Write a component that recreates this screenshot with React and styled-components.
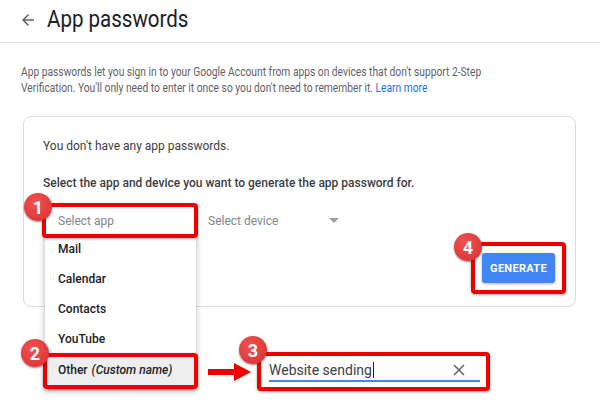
import React from "react";
import styled, { createGlobalStyle } from "styled-components";

const GlobalStyle = createGlobalStyle`
  body {
    margin: 0;
    background: #fff;
    font-family: Roboto, "Liberation Sans", Arial, sans-serif;
  }
`;

const apps = ["Mail", "Calendar", "Contacts", "YouTube"];

const Page = styled.div`
  width: 600px;
  height: 413px;
  overflow: hidden;
  position: relative;
`;

const Header = styled.header`
  display: flex;
  align-items: center;
  padding-left: 19px;
  border-bottom: 1px solid #e0e0e0;
  box-sizing: border-box;
  height: 43px;
`;

const BackButton = styled.span`
  display: flex;
  color: #5f6368;
  margin-right: 10px;
  margin-top: -3px;
`;

// the screenshot is a bit narrow horizontally
const Title = styled.h1`
  margin: -5px 0 0;
  font-size: 24px;
  font-weight: 400;
  color: #202124;
  transform: scaleX(0.855);
  transform-origin: left center;
  white-space: nowrap;
`;

const Intro = styled.p`
  margin: 21px 0 0 21px;
  width: 600px;
  font-size: 12.5px;
  line-height: 16px;
  color: #5f6368;
  transform: scaleX(0.82);
  transform-origin: left top;
`;

const Link = styled.a`
  color: #1a73e8;
  text-decoration: none;
`;

const Card = styled.section`
  position: relative;
  margin: 20px 24px 0 23px;
  border: 1px solid #dadce0;
  border-radius: 8px;
  padding: 20px 9px 12px 18px;
`;

const CardText = styled.p`
  margin: ${(p) => p.$top || 0}px 0 0 1px;
  font-size: 12px;
  line-height: 18px;
  color: #3c4043;
  font-weight: ${(p) => (p.$strong ? 500 : 400)};
`;

const SelectRow = styled.div`
  display: flex;
  align-items: center;
  margin-top: 11px;
`;

const SelectWrap = styled.div`
  position: relative;
`;

const Highlight = styled.div`
  position: relative;
  z-index: 2;
  border: 4px solid #ee0000;
  border-radius: 4px;
  box-shadow: 0 1px 3px rgba(0, 0, 0, 0.35);
  padding: ${(p) => p.$pad || "0"};
`;

const SelectBox = styled.div`
  width: 148px;
  height: 27px;
  box-sizing: border-box;
  padding-left: 12px;
  display: flex;
  align-items: center;
  font-size: 12px;
  color: #80868b;
  background: #fff;
`;

const DeviceSelect = styled.div`
  display: flex;
  align-items: center;
  margin-left: 10px;
  width: 131px;
  font-size: 12px;
  color: #80868b;
`;

const Caret = styled.span`
  margin-left: auto;
  width: 0;
  height: 0;
  border-left: 5px solid transparent;
  border-right: 5px solid transparent;
  border-top: 5px solid #9e9e9e;
`;

const Menu = styled.ul`
  position: absolute;
  z-index: 1;
  top: calc(100% - 4px);
  left: 3px;
  width: 151px;
  margin: 0;
  padding: 0 0 3px;
  list-style: none;
  background: #fff;
  box-shadow: 0 2px 6px rgba(0, 0, 0, 0.3);
`;

const MenuItem = styled.li`
  position: relative;
  height: ${(p) => (p.$active ? 32 : 30)}px;
  display: flex;
  align-items: center;
  padding-left: 13px;
  font-size: 12px;
  font-weight: 500;
  color: #202124;
  background: ${(p) => (p.$active ? "#eeeeee" : "#fff")};

  ${(p) =>
    p.$active &&
    `
    &::after {
      content: "";
      position: absolute;
      inset: -1px -2px -3px -2px;
      border: 4px solid #ee0000;
      border-radius: 4px;
      box-shadow: 0 1px 3px rgba(0, 0, 0, 0.35);
    }
  `}
`;

const Em = styled.em`
  margin-left: 4px;
  font-style: italic;
`;

const Badge = styled.span`
  position: absolute;
  z-index: 3;
  left: ${(p) => p.$x}px;
  top: ${(p) => p.$y}px;
  width: 28px;
  height: 28px;
  border-radius: 50%;
  background: radial-gradient(circle at 40% 35%, #f05252, #d92d2d);
  box-shadow: 0 1px 2px rgba(0, 0, 0, 0.45);
  color: #fff;
  font-size: 18px;
  font-weight: 700;
  font-style: normal;
  display: flex;
  align-items: center;
  justify-content: center;
`;

const Footer = styled.div`
  display: flex;
  justify-content: flex-end;
  margin-top: 4px;
`;

const GenerateButton = styled.button`
  width: 73px;
  height: 30px;
  border: 0;
  border-radius: 3px;
  background: #4285f4;
  color: #fff;
  font-family: inherit;
  font-size: 11px;
  font-weight: 700;
  letter-spacing: 0.3px;
  box-shadow: 0 1px 3px rgba(0, 0, 0, 0.3);
`;

const Callout = styled.div`
  position: absolute;
  left: calc(100% + 12px);
  top: -2px;
  display: flex;
  align-items: center;
  gap: 5px;
`;

const InputBox = styled.div`
  position: relative;
  width: 233px;
  box-sizing: border-box;
  border: 4px solid #ee0000;
  border-radius: 4px;
  box-shadow: 0 1px 3px rgba(0, 0, 0, 0.35);
  padding: 3px 6px 5px 8px;
  background: #fff;
`;

const Field = styled.div`
  height: 23px;
  box-sizing: border-box;
  display: flex;
  align-items: center;
  border-bottom: 2px solid #4285f4;
  font-size: 14px;
  font-weight: 400;
  color: #3c4043;
`;

const TextCursor = styled.span`
  width: 1px;
  height: 16px;
  background: #202124;
  margin-left: 1px;
`;

const ClearIcon = styled.span`
  margin-left: auto;
  margin-right: 14px;
  display: flex;
  color: #5f6368;
`;

export default function App() {
  return (
    <Page>
      <GlobalStyle />
      <Header>
        <BackButton>
          <svg width="18" height="18" viewBox="0 0 24 24" fill="currentColor">
            <path d="M20 11H7.83l5.59-5.59L12 4l-8 8 8 8 1.41-1.41L7.83 13H20v-2z" />
          </svg>
        </BackButton>
        <Title>App passwords</Title>
      </Header>

      <Intro>
        App passwords let you sign in to your Google Account from apps on devices that don't support
        2-Step Verification. You'll only need to enter it once so you don't need to remember it.{" "}
        <Link>Learn more</Link>
      </Intro>

      <Card>
        <CardText>You don't have any app passwords.</CardText>
        <CardText $top={19} $strong>
          Select the app and device you want to generate the app password for.
        </CardText>

        <SelectRow>
          <SelectWrap>
            <Highlight>
              <Badge $x={-22} $y={-14}>1</Badge>
              <SelectBox>Select app</SelectBox>
            </Highlight>
            <Menu>
              {apps.map((app) => (
                <MenuItem key={app}>{app}</MenuItem>
              ))}
              <MenuItem $active>
                <Badge $x={-24} $y={-15}>2</Badge>
                Other <Em>(Custom name)</Em>
                <Callout>
                  <svg width="44" height="20" viewBox="0 0 44 20">
                    <path d="M0 7h26V1l17 9-17 9v-6H0z" fill="#ee0000" />
                  </svg>
                  <InputBox>
                    <Badge $x={-22} $y={-20}>3</Badge>
                    <Field>
                      Website sending
                      <TextCursor />
                      <ClearIcon>
                        <svg width="14" height="14" viewBox="0 0 14 14" stroke="currentColor" strokeWidth="1.5">
                          <path d="M2 2l10 10M12 2L2 12" />
                        </svg>
                      </ClearIcon>
                    </Field>
                  </InputBox>
                </Callout>
              </MenuItem>
            </Menu>
          </SelectWrap>
          <DeviceSelect>
            Select device
            <Caret />
          </DeviceSelect>
        </SelectRow>

        <Footer>
          <Highlight $pad="7px">
            <Badge $x={-21} $y={-13}>4</Badge>
            <GenerateButton>GENERATE</GenerateButton>
          </Highlight>
        </Footer>
      </Card>
    </Page>
  );
}
